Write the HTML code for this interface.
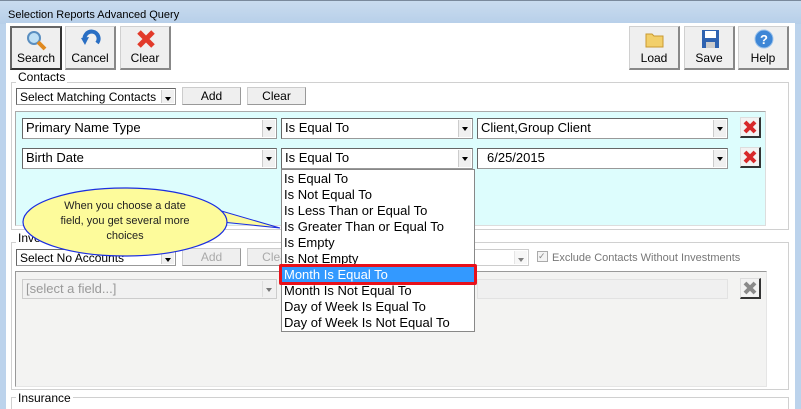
<!DOCTYPE html>
<html style="width:801px;height:409px;overflow:hidden"><head><style>
*{margin:0;padding:0;box-sizing:border-box}
body{width:801px;height:409px;overflow:hidden;background:#bcd3ec;font-family:"Liberation Sans",Arial,sans-serif;position:relative}
.a{position:absolute}
.title{left:0;top:0;width:801px;height:24px;background:linear-gradient(#c9dcef,#b7cfe9);border-top:1px solid #7a8a9c}
.title span{position:absolute;left:8px;top:8px;font-size:11px;color:#000}
.win{left:6px;top:23px;width:789px;height:386px;background:#fff}
.tb{background:#efefef;border:1px solid #d0d0d0;border-right:2px solid #888;border-bottom:2px solid #888;font-size:12px;text-align:center;color:#000}
.tb .l{position:absolute;bottom:3px;left:0;right:0}
.grp{border:1px solid #d0d0d0}
.glab{background:#fff;font-size:12px;padding:0 2px;color:#000}
.sel{background:#fff;border:1px solid #999;border-top-color:#666;border-left-color:#666;font-size:13px;padding:1px 3px;white-space:nowrap;overflow:hidden}
.arr{position:absolute;right:1px;top:1px;bottom:1px;width:13px;background:#f0f0f0;border-left:1px solid #ccc}
.arr:after{content:"";position:absolute;left:3px;top:7px;border:3.5px solid transparent;border-top:4px solid #000}
.btn{background:#efefef;border:1px solid #ccc;border-right-color:#999;border-bottom-color:#999;font-size:12px;text-align:center;line-height:16px}
.xb{width:21px;height:21px;background:#f2f2f2;border-right:2px solid #333;border-bottom:2px solid #333;border-top:1px solid #ddd;border-left:1px solid #ddd}
.list{font-size:13px;line-height:16px}
.list div{padding-left:2px;height:16px}
</style></head><body>
<div class="a title"><span>Selection Reports Advanced Query</span></div>
<div class="a win"></div>
<div class="a tb" style="left:10px;top:26px;width:52px;height:44px;border:2px solid #333;border-top-color:#666;border-left-color:#666">
<svg class="a" style="left:13px;top:1px" width="22" height="22"><circle cx="9" cy="9" r="6" fill="#bfe0f5" stroke="#5a8ec0" stroke-width="2"/><path d="M13 13 L20 20" stroke="#e08a20" stroke-width="4"/></svg><div class="l">Search</div></div>
<div class="a tb" style="left:65px;top:26px;width:51px;height:44px"><svg class="a" style="left:14px;top:2px" width="22" height="20"><path d="M5 12 A7 7 0 1 1 17 14" fill="none" stroke="#2a6fc4" stroke-width="4"/><path d="M1 9 L9 8 L5 16Z" fill="#2a6fc4"/></svg><div class="l">Cancel</div></div>
<div class="a tb" style="left:120px;top:26px;width:51px;height:44px"><svg class="a" style="left:15px;top:2px" width="20" height="20"><path d="M3 3 L17 17 M17 3 L3 17" stroke="#e23a2a" stroke-width="5"/></svg><div class="l">Clear</div></div>
<div class="a tb" style="left:629px;top:26px;width:51px;height:44px"><svg class="a" style="left:15px;top:4px" width="20" height="18"><path d="M1 3 h6 l2 2 h9 v11 h-17z" fill="#f2cf6a" stroke="#c99a30"/></svg><div class="l">Load</div></div>
<div class="a tb" style="left:684px;top:26px;width:51px;height:44px"><svg class="a" style="left:16px;top:2px" width="19" height="20"><rect x="1" y="1" width="17" height="18" fill="#2e62b0"/><rect x="4" y="2" width="11" height="7" fill="#fff"/><rect x="5" y="13" width="9" height="6" fill="#ccc"/></svg><div class="l">Save</div></div>
<div class="a tb" style="left:738px;top:26px;width:51px;height:44px"><svg class="a" style="left:15px;top:2px" width="20" height="20"><circle cx="10" cy="10" r="9" fill="#3d86d6" stroke="#9cc3ec"/><text x="10" y="15" font-size="13" font-weight="bold" fill="#fff" text-anchor="middle" font-family="Liberation Sans">?</text></svg><div class="l">Help</div></div>
<div class="a grp" style="left:11px;top:82px;width:778px;height:148px"></div>
<div class="a glab" style="left:16px;top:70px">Contacts</div>
<div class="a sel" style="left:16px;top:88px;width:160px;height:17px;font-size:12px;padding-top:1px">Select Matching Contacts<div class="arr"></div></div>
<div class="a btn" style="left:182px;top:87px;width:59px;height:18px">Add</div>
<div class="a btn" style="left:247px;top:87px;width:59px;height:18px">Clear</div>
<div class="a" style="left:15px;top:111px;width:751px;height:115px;background:#ddfdfd;border:1px solid #aaa;border-right-color:#ddd;border-bottom-color:#ddd"></div>
<div class="a sel" style="left:22px;top:118px;width:255px;height:21px">Primary Name Type<div class="arr"></div></div>
<div class="a sel" style="left:281px;top:118px;width:192px;height:21px">Is Equal To<div class="arr"></div></div>
<div class="a sel" style="left:477px;top:118px;width:251px;height:21px;font-size:13px">Client,Group Client<div class="arr"></div></div>
<div class="a xb" style="left:740px;top:117px"><svg width="18" height="18"><path d="M4 4 L14 14 M14 4 L4 14" stroke="#d8282a" stroke-width="4"/></svg></div>
<div class="a sel" style="left:22px;top:148px;width:255px;height:21px">Birth Date<div class="arr"></div></div>
<div class="a sel" style="left:281px;top:148px;width:192px;height:21px">Is Equal To<div class="arr"></div></div>
<div class="a sel" style="left:477px;top:148px;width:251px;height:21px;padding-left:9px">6/25/2015<div class="arr"></div></div>
<div class="a xb" style="left:740px;top:147px"><svg width="18" height="18"><path d="M4 4 L14 14 M14 4 L4 14" stroke="#d8282a" stroke-width="4"/></svg></div>
<div class="a grp" style="left:11px;top:242px;width:778px;height:148px"></div>
<div class="a glab" style="left:16px;top:231px">Investments</div>
<div class="a sel" style="left:16px;top:249px;width:160px;height:17px;font-size:12px;padding-top:1px">Select No Accounts<div class="arr"></div></div>
<div class="a btn" style="left:182px;top:248px;width:59px;height:18px;color:#aaa">Add</div>
<div class="a btn" style="left:247px;top:248px;width:59px;height:18px;color:#aaa">Clear</div>
<div class="a sel" style="left:470px;top:249px;width:59px;height:17px;border-color:#ccc"><div class="arr" style="opacity:.5"></div></div>
<div class="a" style="left:537px;top:251px;width:11px;height:11px;border:1px solid #aaa;background:#f4f4f4;font-size:9px;color:#888;line-height:9px">✓</div>
<div class="a" style="left:552px;top:252px;font-size:11px;color:#777">Exclude Contacts Without Investments</div>
<div class="a" style="left:15px;top:271px;width:752px;height:116px;background:#f3f3f2;border:1px solid #999;border-right-color:#e5e5e5;border-bottom-color:#e5e5e5"></div>
<div class="a sel" style="left:22px;top:279px;width:255px;height:20px;background:#f1f1f1;border-color:#ccc;color:#999">[select a field...]<div class="arr" style="opacity:.5"></div></div>
<div class="a" style="left:477px;top:279px;width:251px;height:20px;background:#f0f0f0;border:1px solid #e2e2e2"></div>
<div class="a xb" style="left:740px;top:278px"><svg width="18" height="18"><path d="M4 4 L14 14 M14 4 L4 14" stroke="#8a8a8a" stroke-width="4"/></svg></div>
<div class="a" style="left:11px;top:397px;width:778px;height:12px;border:1px solid #d0d0d0;border-bottom:none"></div>
<div class="a glab" style="left:16px;top:391px">Insurance</div>
<svg class="a" style="left:0;top:180px" width="290" height="100"><path d="M218 30 L280 48 L222 42 Z" fill="#fdfb9b" stroke="#1b2ee0"/><ellipse cx="125" cy="42" rx="102" ry="34" fill="#fdfb9b" stroke="#1b2ee0" stroke-width="1.2"/><path d="M219 33 L223 41" stroke="#fdfb9b" stroke-width="4"/></svg>
<div class="a" style="left:60px;top:199px;width:130px;text-align:center;font-size:11px;line-height:15px;color:#222">When you choose a date field, you get several more choices</div>
<div class="a list" style="left:281px;top:169px;width:194px;height:163px;background:#fff;border:1px solid #888;padding-top:1px">
<div>Is Equal To</div><div>Is Not Equal To</div><div>Is Less Than or Equal To</div><div>Is Greater Than or Equal To</div><div>Is Empty</div><div>Is Not Empty</div><div style="background:#3399ff;color:#fff">Month Is Equal To</div><div>Month Is Not Equal To</div><div>Day of Week Is Equal To</div><div>Day of Week Is Not Equal To</div>
</div>
<div class="a" style="left:279px;top:264px;width:198px;height:21px;border:3px solid #e8101a;border-radius:2px"></div>
</body></html>
